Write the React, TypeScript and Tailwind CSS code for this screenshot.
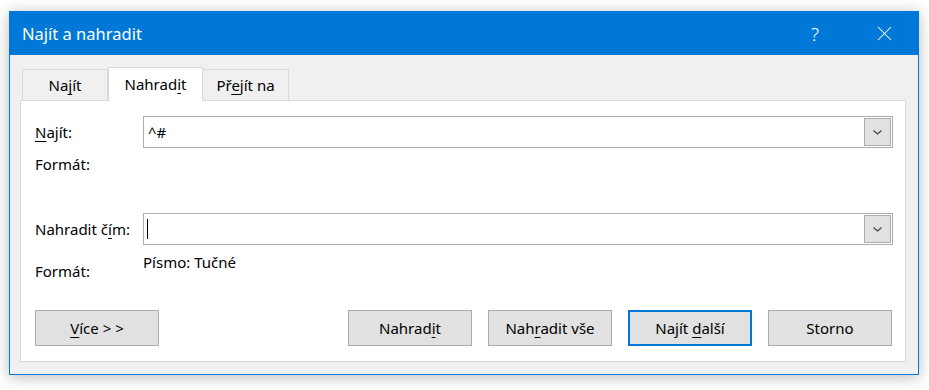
import { X } from "lucide-react"

const font = { fontFamily: '"Segoe UI", "Noto Sans", "Open Sans", sans-serif' }

function Chevron() {
  return (
    <svg width="11" height="7" viewBox="0 0 11 7" fill="none">
      <path d="M1.5 1.5 L5.5 5 L9.5 1.5" stroke="#404040" strokeWidth="1.1" />
    </svg>
  )
}

function Combo({ value, caret }: { value?: string; caret?: boolean }) {
  return (
    <div className="flex-1 h-[32px] border border-[#adadad] bg-white flex items-center">
      <div className="flex-1 flex items-center pl-[4px] text-[15px] text-black">
        {caret && <span className="w-px h-[20px] bg-black ml-[-1px]" />}
        {value}
      </div>
      <div className="w-[27px] h-[28px] mr-px bg-[#e1e1e1] border border-[#adadad] flex items-center justify-center">
        <Chevron />
      </div>
    </div>
  )
}

function Btn({ children, primary }: { children: React.ReactNode; primary?: boolean }) {
  return (
    <button
      className={
        "w-[124px] h-[36px] bg-[#e1e1e1] text-[15px] text-black flex items-center justify-center " +
        (primary ? "border-2 border-[#0078d7]" : "border border-[#adadad]")
      }
    >
      {children}
    </button>
  )
}

const u = "underline underline-offset-[3px] decoration-1"

export default function App() {
  return (
    <div className="w-[929px] h-[390px] bg-white pt-[11px] pl-[9px]" style={font}>
      <div className="w-[910px] h-[364px] border border-[#0078d7] bg-[#f0f0f0] shadow-[0_2px_14px_rgba(0,0,0,0.28)] flex flex-col">
        {/* Title bar */}
        <div className="h-[43px] bg-[#0078d7] flex items-center text-white">
          <div className="pl-[12px] text-[16.5px] flex-1 pt-[1px]">Najít a nahradit</div>
          <div className="text-[19px] font-light w-[20px] text-center mr-[47px] pt-[1px]">?</div>
          <X size={25} strokeWidth={1} className="mr-[21px]" />
        </div>

        {/* Tabs */}
        <div className="flex items-end h-[45px] pl-[12px]">
          <div className="w-[86px] h-[31px] border border-b-0 border-[#d9d9d9] bg-[#f0f0f0] flex items-center justify-center text-[15px] pt-[1px]">
            <span>
              Na<span className={u}>j</span>ít
            </span>
          </div>
          <div className="w-[95px] h-[34px] border border-b-0 border-[#d9d9d9] bg-white flex items-center justify-center text-[15px] relative top-px z-10">
            <span>
              Nahrad<span className={u}>i</span>t
            </span>
          </div>
          <div className="w-[86px] h-[31px] border border-b-0 border-l-0 border-[#d9d9d9] bg-[#f0f0f0] flex items-center justify-center text-[15px] pt-[1px]">
            <span>
              Př<span className={u}>e</span>jít na
            </span>
          </div>
        </div>

        {/* Panel */}
        <div className="ml-[10px] w-[886px] h-[262px] border border-[#d9d9d9] bg-white pt-[15px] pl-[14px] pr-[12px] text-[15px] text-black">
          <div className="flex items-center h-[32px]">
            <div className="w-[108px]">
              <span className={u}>N</span>ajít:
            </div>
            <Combo value="^#" />
          </div>
          <div className="mt-[6px] leading-[20px]">Formát:</div>

          <div className="flex items-center h-[32px] mt-[39px]">
            <div className="w-[108px]">
              Nahradit č<span className={u}>í</span>m:
            </div>
            <Combo caret />
          </div>
          <div className="flex leading-[20px]">
            <div className="w-[108px] mt-[16px]">Formát:</div>
            <div className="mt-[7px]">Písmo: Tučné</div>
          </div>

          <div className="flex mt-[29px]">
            <Btn>
              <span>
                <span className={u}>V</span>íce &gt; &gt;
              </span>
            </Btn>
            <div className="flex-1" />
            <div className="flex gap-[16px] mr-[1px]">
              <Btn>
                <span>
                  Nahrad<span className={u}>i</span>t
                </span>
              </Btn>
              <Btn>
                <span>
                  Nah<span className={u}>r</span>adit vše
                </span>
              </Btn>
              <Btn primary>
                <span>
                  Najít <span className={u}>d</span>alší
                </span>
              </Btn>
              <Btn>Storno</Btn>
            </div>
          </div>
        </div>
      </div>
    </div>
  )
}
